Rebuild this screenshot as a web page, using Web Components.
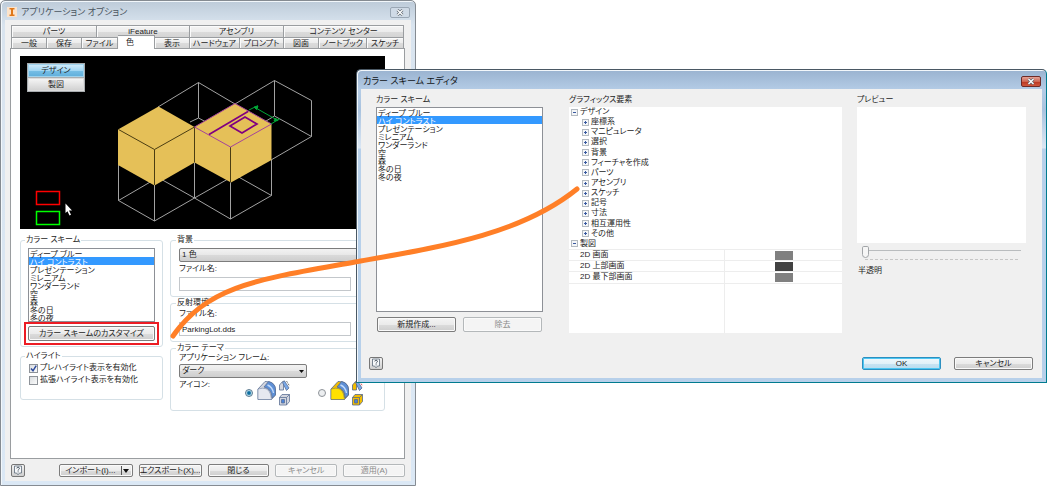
<!DOCTYPE html>
<html>
<head>
<meta charset="utf-8">
<title>アプリケーション オプション</title>
<style>
  body {
    margin: 0;
    background: #fff;
    color: #1c1c1c;
    font: 8px/10px "Liberation Sans", "Noto Sans CJK JP", sans-serif;
    font-feature-settings: "palt";
  }
</style>
</head>
<body>
<options-desktop></options-desktop>

<script>
const BASE = `<style>
  *, *::before, *::after { box-sizing: border-box; }
  button, input, select { font: inherit; font-feature-settings: inherit; color: inherit; margin: 0; }
  button { padding: 0; }
</style>`;

function define(name, html, setup) {
  const template = document.createElement('template');
  template.innerHTML = BASE + html;
  customElements.define(name, class extends HTMLElement {
    constructor() {
      super();
      this.attachShadow({ mode: 'open' }).append(template.content.cloneNode(true));
    }
    connectedCallback() {
      if (setup && !this.ready) { this.ready = true; setup(this, this.shadowRoot); }
    }
  });
}

/* Window frame with a title bar */
define('app-window', `
<style>
  :host { display: flex; flex-direction: column; padding: 0 4px 4px;
    border: 1px solid #858b92; border-radius: 5px 5px 0 0;
    background: linear-gradient(#bdcbd9, #d9e4ef 24px, #dbe8f5); box-shadow: inset 1px 1px 0 #f2f7fb; }
  :host([active]) { border-color: #4a5864 #007b8f #007b8f #4a5864;
    background: linear-gradient(#9ab3d0, #b4cce6 20px, #a9c3df 40px, #dbe7f4 78px, #b7d0ea 79px); }
  header { display: flex; align-items: center; gap: 4px; height: 19px; padding: 3px 1px 0 2px;
    font-size: 9px; line-height: 12px; color: #4b5560; }
  :host([active]) header { color: #101418; }
  h1 { flex: 1; margin: 0; font: inherit; }
  button { width: 20px; height: 11px; display: grid; place-items: center;
    border: 1px solid #9aa7b5; border-radius: 2px; background: #cfdae6; }
  :host([active]) button { border-color: #6d2b27; background: linear-gradient(#e4a397, #cf6652 50%, #b8341f 51%, #d0573c); }
  main { flex: 1; display: flex; flex-direction: column; background: #f0f0f0; }
</style>
<header><slot name="icon"></slot><h1></h1>
  <button aria-label="close"><svg width="8" height="7" viewBox="0 0 8 7"><path d="M1.5 1l5 5M6.5 1l-5 5" stroke="#5a636d" stroke-width="2.6"/><path d="M1.5 1l5 5M6.5 1l-5 5" stroke="#fff" stroke-width="1.4"/></svg></button>
</header>
<main><slot></slot></main>`, (host, root) => {
  root.querySelector('h1').textContent = host.getAttribute('heading');
});

define('push-button', `
<style>
  :host { display: block; }
  button { display: block; width: 100%; height: var(--button-height, 13px); line-height: 9px;
    border: 1px solid #7c7c7c; border-radius: 2px; white-space: nowrap;
    background: linear-gradient(#f4f4f4, #ebebeb 50%, #dcdcdc 51%, #cecece); box-shadow: inset 0 0 0 1px #fafafa; }
  :host([primary]) button { border-color: #2c8fc0; box-shadow: inset 0 0 0 1px #4cc6f2;
    background: linear-gradient(#f0f8fc, #e2f1f9 50%, #c8e4f3 51%, #b9dcef); }
  :host([disabled]) button { color: #8a8a8a; border-color: #b4b8ba; background: #f4f4f4; }
</style>
<button><slot></slot></button>`, (host, root) => {
  root.querySelector('button').disabled = host.hasAttribute('disabled');
});

define('help-button', `
<style>
  :host { display: block; width: 14px; }
  button { display: grid; place-items: center; width: 14px; height: 13px; border: 1px solid #777;
    border-radius: 2px; background: linear-gradient(#f4f4f4, #cfcfcf); }
</style>
<button aria-label="help"><svg width="10" height="11" viewBox="0 0 10 11"><path d="M1.5 1h7v7h-2L5 9.8 3.6 8H1.5z" fill="#f7f9fb" stroke="#5c6a78" stroke-width=".8"/><path d="M3.8 3.4c0-1.6 2.6-1.6 2.6 0 0 1-1.3.9-1.3 2.2M5.1 6.4v1" fill="none" stroke="#34424f" stroke-width=".9"/></svg></button>`);

define('group-box', `
<style>
  :host { display: block; }
  fieldset { margin: 0; min-width: 0; border: 1px solid #d5e0e6; border-radius: 3px; padding: var(--box-padding, 3px 7px 1px); }
  legend { margin: 0 0 0 -3px; padding: 0 1px; }
</style>
<fieldset><legend></legend><slot></slot></fieldset>`, (host, root) => {
  root.querySelector('legend').textContent = host.getAttribute('heading');
});

define('scheme-list', `
<style>
  :host { display: block; }
  select { display: block; width: 100%; height: 100%; min-height: 74px; padding: 0; border: 1px solid #8d9096;
    border-radius: 0; background: #fff; overflow: hidden; outline: none; scrollbar-width: none; }
  option { display: flex; align-items: center; height: 8px; min-height: 8px; padding: 0 1px; line-height: 8px !important; overflow: visible; }
  option:checked { color: #fff; background: #3399ff linear-gradient(#3399ff, #3399ff); }
</style>
<select size="9" aria-label="カラー スキーム">
  <option>ディープ ブルー</option><option selected>ハイ コントラスト</option><option>プレゼンテーション</option>
  <option>ミレニアム</option><option>ワンダーランド</option><option>空</option><option>森</option>
  <option>冬の日</option><option>冬の夜</option>
</select>`);

define('drop-down', `
<style>
  :host { display: grid; }
  label { display: contents; }
  label > * { grid-area: 2 / 1; }
  .caption { grid-area: 1 / 1; margin-bottom: 1px; }
  .caption:empty { display: none; }
  select { appearance: none; height: 14px; padding: 0 2px; line-height: 10px; border: 1px solid #7c7c7c; border-radius: 2px;
    background: linear-gradient(#f2f2f2, #e8e8e8 50%, #dadada 51%, #cecece); }
  svg { justify-self: end; align-self: center; margin-right: 3px; }
</style>
<label><span class="caption"></span><select><option></option></select>
<svg width="5" height="3" viewBox="0 0 5 3"><path d="M0 0h5L2.5 3z" fill="#111"/></svg></label>`, (host, root) => {
  root.querySelector('.caption').textContent = host.getAttribute('caption') || '';
  if (!host.hasAttribute('caption')) root.querySelector('select').ariaLabel = '背景';
  root.querySelector('option').textContent = host.getAttribute('value');
});

define('text-field', `
<style>
  :host { display: block; }
  label { display: grid; gap: 3px; }
  input { width: calc(100% - 25px); height: 14px; padding: 0 2px; border: 1px solid #c3c7cb; background: #fff; }
</style>
<label><span></span><input type="text"></label>`, (host, root) => {
  root.querySelector('span').textContent = host.getAttribute('caption');
  root.querySelector('input').value = host.getAttribute('value') || '';
});

define('check-option', `
<style>
  :host { display: block; }
  label { display: flex; align-items: center; gap: 2px; height: 12px; white-space: nowrap; }
  .mark { display: grid; margin-left: 1px; }
  .mark > * { grid-area: 1 / 1; }
  input { appearance: none; width: 9px; height: 9px; border: 1px solid #8e9399; background: linear-gradient(135deg, #dadde0, #fbfbfb); }
  svg { display: none; }
  input:checked + svg { display: block; }
</style>
<label><span class="mark"><input type="checkbox"><svg width="9" height="9" viewBox="0 0 9 9"><path d="M2 4.4l2 2.4L7.2 1.6" fill="none" stroke="#2c4a9c" stroke-width="1.5"/></svg></span><slot></slot></label>`, (host, root) => {
  root.querySelector('input').checked = host.hasAttribute('checked');
});

define('tab-strip', `
<style>
  :host { display: block; margin: 0 1px; }
  div { display: grid; height: 12px; }
  .back { grid-template-columns: 86fr 93fr 94fr 120fr; }
  .front { grid-template-columns: 36fr 35fr 36fr 37fr 35fr 50fr 44fr 35fr 48fr 37fr; height: 11px; }
  button { min-width: 0; white-space: nowrap; line-height: 9px; border: 1px solid #9a9da0; border-width: 1px 1px 0 0;
    background: linear-gradient(#f4f4f4, #ececec 50%, #dcdcdc 51%, #d4d4d4); box-shadow: inset 1px 1px 0 #fbfbfb; }
  button:first-child { border-left-width: 1px; }
  button[aria-selected] { position: relative; margin: -2px 0 -1px; background: #fff; padding-right: 12px; }
</style>
<div class="back" role="tablist">
  <button role="tab">パーツ</button><button role="tab">iFeature</button><button role="tab">アセンブリ</button><button role="tab">コンテンツ センター</button>
</div>
<div class="front" role="tablist">
  <button role="tab">一般</button><button role="tab">保存</button><button role="tab">ファイル</button><button role="tab" aria-selected="true">色</button><button role="tab">表示</button><button role="tab">ハードウェア</button><button role="tab">プロンプト</button><button role="tab">図面</button><button role="tab">ノートブック</button><button role="tab">スケッチ</button>
</div>`);

/* Sample scene: two solids among wireframe cubes */
define('scene-preview', `
<style>
  :host { display: grid; height: 173px; background: #000; overflow: hidden; }
  svg, nav { grid-area: 1 / 1; }
  nav { align-self: start; justify-self: start; display: grid; gap: 1px; width: 58px; margin: 7px; padding: 1px; background: #a9adb0; }
  button { height: 13px; line-height: 10px; border: 1px solid #dcdcdc; background: linear-gradient(#f4f4f4, #d2d2d2); }
  button[aria-pressed] { border-color: #9fd2ec; background: linear-gradient(#cfeafa, #a3d7f3 50%, #77bfe6 51%, #62b0dc); }
</style>
<svg width="365" height="173" viewBox="20 56 365 173">
  <g fill="none" stroke="#a2a2a2" stroke-width="1">
    <path d="M158 107L198.500 82.500L235 104M198.500 82.500V118M190 122L198.500 118L208 123"/>
    <path d="M235 104L274.500 80.500L311.500 100.500V136.500L271 160M274.500 80.500V116M266 121L274.500 116L311.500 136.500"/>
    <path d="M118.500 165V200.500L154.500 221L194.500 198L230.500 219L271.500 195.500V160M154.500 185V221M194.500 162V198M230.500 182V219"/>
    <path d="M118.500 200.500L158 177.500L194.500 198L235 175L271.500 195.500"/>
  </g>
  <g fill="#e5c058">
    <path d="M118 129.500L158.500 106.500L194.500 127V162.500L154.500 185.500L118 165z"/>
    <path d="M194.500 127L235 103.500L271.500 124V160L231 182.500L194.500 162.500z"/>
  </g>
  <g fill="none" stroke="#4b3d12"><path d="M118.500 129.500L154.500 149.500L194.500 127V162.500M154.500 149.500V185M230.500 147V182.500"/></g>
  <path d="M194.500 127L235 103.500L271.500 124L230.500 147z" fill="none" stroke="#a5449a"/>
  <g fill="none" stroke="#800080" stroke-width="1.700"><path d="M209 134.500L248 111.500M230 126L245 117L257 124L242 133z"/></g>
  <g stroke="#00a838" fill="#00a838"><path d="M249 110l9-4.500M271 124l9-5.500M255 107.500L277 120" fill="none"/><path d="M254 107l4-.5-1.500 3zM278 120.500l-4 .5 1.500-3z"/></g>
  <rect x="36.500" y="191.500" width="23" height="13" fill="none" stroke="#ff0000" stroke-width="1.500"/>
  <rect x="36.500" y="211.500" width="23" height="13" fill="none" stroke="#00ff00" stroke-width="1.500"/>
  <path d="M65.500 203.500V213l2-1.800 2 4.300 1.500-.8-2-4.100 3-.2z" fill="#fff"/>
</svg>
<nav><button aria-pressed="true">デザイン</button><button>製図</button></nav>`);

define('icon-theme', `
<style>
  :host { display: flex; gap: 4px; margin-top: 2px; }
  .caption { width: 62px; }
  label { display: flex; align-items: center; gap: 4px; width: 69px; }
  label:last-child { width: auto; }
  input { appearance: none; flex: none; width: 8px; height: 8px; border: 1px solid #8e9399; border-radius: 50%; background: #eceef0; }
  input:checked { border-color: #5b7a90; background: radial-gradient(circle, #0d6ea0 0 30%, #b8dcec 60%); }
  svg { --solid: #d3d6df; --pale: #e6e8f0; --edge: #5d7196; }
  .gold { --solid: #f2bd00; --pale: #ffe000; --edge: #55688c; }
</style>
<span class="caption">アイコン:</span>
<label><input type="radio" name="theme" aria-label="アイコン 1" checked></label>
<label><input type="radio" name="theme" aria-label="アイコン 2"></label>`, (host, root) => {
  root.querySelectorAll('label').forEach((label, i) => {
    label.insertAdjacentHTML('beforeend', `<svg class="${i ? 'gold' : ''}" width="33" height="26" viewBox="0 0 33 26">
      <g stroke-linejoin="round" stroke="var(--edge)" stroke-width=".8">
      <path d="M1 9L8 1.500Q18 1 18.500 10V15L14.500 19.500H1z" fill="var(--solid)"/>
      <path d="M1 9Q11 6 13.500 14L14.500 19.500H1z" fill="var(--pale)" stroke-width=".5"/>
      <path d="M7 7L11.500 1.500Q18.500 3 18.500 10V15L15 18Q15 9 7 7z" fill="#5d8fd6"/><path d="M10.500 5Q15.500 7 16.500 13" fill="none" stroke="#c2dafa" stroke-width="1.400"/>
      <path d="M22.500 10V5l3-3.500 2-.5-1 3v6z" fill="var(--solid)"/><path d="M25.500 2.500l2-1.500 4.500 7-2.500 2.500z" fill="#79a8e8"/><path d="M29.500 1l3 5" stroke="${i ? '#e03030' : '#555'}" stroke-dasharray="2 1"/>
      <path d="M22.500 17.500l2.500-3h7.500v7l-3 3.500h-7z" fill="var(--solid)"/><path d="M22.500 17.500h7V25M29.500 17.500l3-3" fill="none"/><rect x="24.500" y="19.500" width="3" height="3.500" fill="#4c84d8"/></g></svg>`);
  });
});

define('options-page', `
<style>
  :host { flex: 1; display: flex; flex-direction: column; padding: 5px 6px 4px 5px; }
  .panel { flex: 1; padding: 7px 19px 0 9px; border: 1px solid #9a9da0; background: #fff; }
  .columns { display: grid; grid-template-columns: minmax(0, 143fr) minmax(0, 215fr); gap: 7px; margin-top: 6px; align-items: start; }
  .left { display: grid; gap: 4px; }
  .right { display: grid; gap: 1px; }
  .marked { margin: 0 -4px; padding: 2px; border: 2px solid #ec1c24; --button-height: 15px; }
  .background { --box-padding: 3px 8px 5px; }
  .reflection { --box-padding: 1px 8px 5px; }
  .theme { --box-padding: 0 8px 4px; }
  .background text-field { margin-top: 2px; }
  .theme drop-down { width: 128px; }
  .highlight { --box-padding: 1px 7px 13px; }
  footer { display: flex; gap: 6px; margin-top: 5px; }
  footer > * { flex: 63; }
  footer help-button { flex: none; margin-right: 28px; margin-left: 1px; }
  footer .import { flex: 75; }
  .import svg { float: right; margin: 0 2px 0 0; }
</style>
<tab-strip></tab-strip>
<section class="panel">
  <scene-preview></scene-preview>
  <div class="columns">
    <div class="left">
      <group-box heading="カラー スキーム"><scheme-list></scheme-list>
        <div class="marked"><push-button>カラー スキームのカスタマイズ</push-button></div></group-box>
      <group-box class="highlight" heading="ハイライト">
        <check-option checked>プレハイライト表示を有効化</check-option>
        <check-option>拡張ハイライト表示を有効化</check-option></group-box>
    </div>
    <div class="right">
      <group-box class="background" heading="背景"><drop-down value="1 色"></drop-down><text-field caption="ファイル名:"></text-field></group-box>
      <group-box class="reflection" heading="反射環境"><text-field caption="ファイル名:" value="ParkingLot.dds"></text-field></group-box>
      <group-box class="theme" heading="カラー テーマ"><drop-down caption="アプリケーション フレーム:" value="ダーク"></drop-down><icon-theme></icon-theme></group-box>
    </div>
  </div>
</section>
<footer>
  <help-button></help-button>
  <push-button class="import">インポート(I)...<svg width="9" height="9" viewBox="0 0 9 9"><path d="M.5 0v9" stroke="#555"/><path d="M2 3h6L5 7z" fill="#111"/></svg></push-button>
  <push-button>エクスポート(X)...</push-button><push-button>閉じる</push-button>
  <push-button disabled>キャンセル</push-button><push-button disabled>適用(A)</push-button>
</footer>`);

define('element-tree', `
<style>
  :host { display: block; background: #fff; }
  table { width: 100%; height: 226px; border-collapse: collapse; table-layout: fixed; }
  col:first-child { width: 57%; }
  td { padding: 0 0 0 2px; line-height: 10px; }
  td.child { padding-left: 13px; }
  .value td { padding-left: 11px; border: solid #ededed; border-width: 1px 0; }
  .value td + td { padding: 0; border-left-width: 1px; }
  .rest { height: 50px; }
  .rest td + td { border-left: 1px solid #ededed; }
  .cell { display: flex; align-items: center; gap: 2px; }
  button { display: block; width: 7px; height: 7px; border: 1px solid #b4bac0; background: #f4f6f8; }
  svg { display: block; }
  i { display: block; width: 18px; height: 9px; margin: 0 auto; }
</style>
<table role="treegrid" aria-label="グラフィックス要素"><colgroup><col><col></colgroup><tbody></tbody></table>`, (host, root) => {
  const node = (name, open) => `<tr><td colspan="2" class="${open ? '' : 'child'}"><span class="cell"><button aria-label="${name}" aria-expanded="${open}"><svg width="5" height="5" viewBox="0 0 5 5"><path d="M1 2.500h3${open ? '' : 'M2.500 1v3'}" stroke="#3a5aa0"/></svg></button>${name}</span></td></tr>`;
  const value = (name, color) => `<tr class="value"><td>${name}</td><td><i style="background:${color}"></i></td></tr>`;
  root.querySelector('tbody').innerHTML = node('デザイン', true)
    + ['座標系', 'マニピュレータ', '選択', '背景', 'フィーチャを作成', 'パーツ', 'アセンブリ', 'スケッチ', '記号', '寸法', '相互運用性', 'その他'].map(n => node(n, false)).join('')
    + node('製図', true)
    + value('2D 画面', '#808080') + value('2D 上部画面', '#424242') + value('2D 最下部画面', '#808080')
    + '<tr class="rest"><td></td><td></td></tr>';
});

define('opacity-slider', `
<style>
  :host { display: block; }
  label { display: grid; }
  input { appearance: none; display: block; width: calc(100% - 10px); height: 14px; margin: 0 5px; background: linear-gradient(#b9bcbe, #b9bcbe) 0 5px / 100% 1px no-repeat; }
  input::-webkit-slider-thumb { appearance: none; width: 7px; height: 12px; border: 1px solid #a2a5a8; border-radius: 2px 2px 4px 4px; background: #f6f6f6; }
  .ticks { height: 2px; margin: 0 8px 5px; background: repeating-linear-gradient(90deg, #c6c6c6 0 3px, transparent 3px 5px) 0 0 / 100% 1px no-repeat; }
  .caption { padding-left: 1px; }
</style>
<label><input type="range" min="0" max="100" value="0"><span class="ticks"></span><span class="caption">半透明</span></label>`);

define('scheme-editor', `
<style>
  :host { flex: 1; display: flex; flex-direction: column; padding: 6px 8px 8px; }
  .columns { display: grid; grid-template-columns: 167fr 284fr 169fr; gap: 15px; padding: 0 8px 0 7px; }
  section { display: grid; grid-template: 10px 1fr auto / 1fr; gap: 2px; }
  .tree { margin-left: 11px; grid-template-rows: 10px auto; }
  .schemes .buttons { display: grid; grid-template-columns: 1fr 1fr; gap: 7px; margin: 3px 1px 1px; --button-height: 15px; }
  .preview { align-content: start; grid-template-rows: 10px 136px auto; gap: 2px; }
  .canvas { background: #fff; }
  footer { display: flex; gap: 13px; margin-top: 24px; padding-right: 1px; }
  footer help-button { margin-right: auto; }
  footer push-button { width: 79px; }
</style>
<div class="columns">
  <section class="schemes"><span>カラー スキーム</span><scheme-list></scheme-list>
    <div class="buttons"><push-button>新規作成...</push-button><push-button disabled>除去</push-button></div></section>
  <section class="tree"><span>グラフィックス要素</span><element-tree></element-tree></section>
  <section class="preview"><span>プレビュー</span><div class="canvas"></div><opacity-slider></opacity-slider></section>
</div>
<footer><help-button></help-button><push-button primary>OK</push-button><push-button>キャンセル</push-button></footer>`);

define('options-desktop', `
<style>
  :host { position: relative; display: grid; grid-template-columns: 356fr 60fr 631fr; min-height: 100vh; }
  .options { grid-area: 1 / 1 / 2 / 3; }
  .editor { grid-area: 1 / 2 / 2 / 4; align-self: start; margin-top: 69px; z-index: 1; }
  .link { position: absolute; inset: 0; width: 100%; height: 100%; z-index: 2; pointer-events: none; }
</style>
<app-window class="options" heading="アプリケーション オプション">
  <svg slot="icon" width="10" height="10" viewBox="0 0 10 10"><rect width="10" height="10" fill="#fbe3cb"/><path d="M2.500 1h5v1.500H6v5h1.500V9h-5V7.500H4v-5H2.500z" fill="#e07818"/></svg>
  <options-page></options-page>
</app-window>
<app-window class="editor" active heading="カラー スキーム エディタ"><scheme-editor></scheme-editor></app-window>
<svg class="link" viewBox="0 0 1047 486" preserveAspectRatio="none"><path d="M173 336C208 285 260 279 355 262C440 247 520 235 577 189" fill="none" stroke="#ff7f27" stroke-width="5" stroke-linecap="round"/></svg>`);
</script>
</body>
</html>
